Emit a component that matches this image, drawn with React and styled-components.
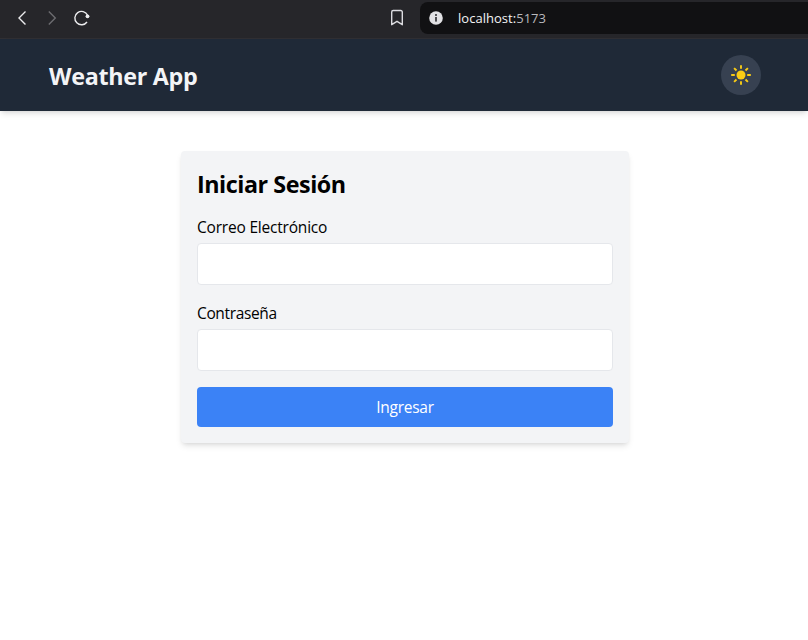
import React from 'react';
import styled, { createGlobalStyle } from 'styled-components';

const GlobalStyle = createGlobalStyle`
  *, *::before, *::after { box-sizing: border-box; }
  body {
    margin: 0;
    min-height: 100vh;
    background: #ffffff;
    color: #000000;
    font: 15.5px/24px "Open Sans", "Noto Sans", sans-serif;
  }
`;

const BrowserBar = styled.div`
  height: 39px;
  padding-left: 12px;
  display: flex;
  align-items: flex-start;
  background: #26262a;
  border-bottom: 1px solid #302f33;
`;

const NavButtons = styled.div`
  display: flex;
  flex: 0 0 375px;
  gap: 10px;
  padding-top: 8px;
`;

const BarIcon = styled.svg`
  display: block;
  flex: none;
  width: 20px;
  height: 20px;
  fill: none;
  stroke: ${(p) => (p.$dim ? '#6c6c70' : '#ececee')};
  stroke-width: 1.4;
`;

const Bookmark = styled(BarIcon)`
  margin: 8px 13px 0 0;
  stroke: #dcdce0;
`;

const AddressBar = styled.div`
  flex: 1;
  height: 32px;
  margin-top: 2px;
  padding-left: 9px;
  display: flex;
  align-items: center;
  gap: 15px;
  background: #111113;
  border-radius: 8px 0 0 8px;
`;

const InfoIcon = styled.svg`
  width: 14px;
  height: 14px;
  display: block;
`;

const Address = styled.span`
  font-size: 13px;
  line-height: 20px;
  letter-spacing: 0.03px;
  color: #f4f4f5;
`;

const Port = styled.span`
  color: #b9b9bd;
`;

const Header = styled.header`
  height: 72px;
  padding: 0 47px 0 49px;
  display: flex;
  align-items: center;
  justify-content: space-between;
  background: #1f2937;
  color: #f3f4f6;
  box-shadow: 0 4px 6px -1px rgba(0, 0, 0, 0.1), 0 2px 4px -2px rgba(0, 0, 0, 0.1);
`;

const Title = styled.h1`
  margin: 1px 0 0;
  font-size: 23.3px;
  line-height: 32px;
  font-weight: 700;
  letter-spacing: -0.3px;
`;

const ThemeButton = styled.button`
  width: 40px;
  height: 40px;
  padding: 0;
  display: grid;
  place-items: center;
  border: 0;
  border-radius: 50%;
  background: #374151;
`;

const Sun = styled.svg`
  width: 20px;
  height: 20px;
  fill: #facc15;
  stroke: #facc15;
  stroke-width: 1.9;
`;

const Main = styled.main`
  display: flex;
  justify-content: center;
  padding: 40px 0 0 2px;
`;

const Card = styled.form`
  width: 448px;
  padding: 16px;
  background: #f3f4f6;
  border-radius: 4px;
  box-shadow: 0 4px 6px -1px rgba(0, 0, 0, 0.1), 0 2px 4px -2px rgba(0, 0, 0, 0.1);
`;

const CardTitle = styled.h2`
  height: 32px;
  margin: 0 0 16px;
  padding-top: 1px;
  font-size: 23.3px;
  line-height: 32px;
  font-weight: 700;
  letter-spacing: -0.45px;
`;

const Field = styled.div`
  margin-bottom: 16px;
`;

const Label = styled.label`
  display: block;
  height: 24px;
  margin-bottom: 4px;
  letter-spacing: ${(p) => p.$tracking};
`;

const Input = styled.input`
  display: block;
  width: 100%;
  height: 42px;
  padding: 8px;
  font: inherit;
  background: #ffffff;
  border: 1px solid #e5e7eb;
  border-radius: 4px;
  outline: 0;
`;

const Submit = styled.button`
  display: block;
  width: 100%;
  height: 40px;
  padding: 0;
  font: inherit;
  letter-spacing: -0.25px;
  color: #ffffff;
  background: #3b82f6;
  border: 0;
  border-radius: 4px;
`;

export default function App() {
  return (
    <>
      <GlobalStyle />
      <BrowserBar>
        <NavButtons>
          <BarIcon viewBox="0 0 20 20"><path d="M13.5 3.5 7 10l6.5 6.5" /></BarIcon>
          <BarIcon viewBox="0 0 20 20" $dim><path d="M6.8 3.5 13.3 10l-6.5 6.5" /></BarIcon>
          <BarIcon viewBox="0 0 20 20">
            <path d="M15.6 7.2A6.7 6.7 0 1 0 15 14" />
            <circle cx="15.5" cy="8.3" r="1.9" fill="#ececee" stroke="none" />
          </BarIcon>
        </NavButtons>
        <Bookmark viewBox="0 0 20 20">
          <path d="M4.7 16.7V4a1.5 1.5 0 0 1 1.5-1.5h7.6A1.5 1.5 0 0 1 15.3 4v12.7L10 13.3z" strokeLinejoin="round" />
        </Bookmark>
        <AddressBar>
          <InfoIcon viewBox="0 0 14 14">
            <circle cx="7" cy="7" r="6.8" fill="#e2e2e5" />
            <circle cx="7" cy="4" r="1" fill="#2a2a2e" />
            <rect x="6.2" y="6" width="1.6" height="4.6" fill="#2a2a2e" />
          </InfoIcon>
          <Address>localhost:<Port>5173</Port></Address>
        </AddressBar>
      </BrowserBar>
      <Header>
        <Title>Weather App</Title>
        <ThemeButton type="button" aria-label="Tema">
          <Sun viewBox="0 0 20 20">
            <circle cx="10" cy="10" r="4.5" stroke="none" />
            <path d="M10 .2v3.6M10 16.2v3.6M.2 10h3.6M16.2 10h3.6M3.1 3.1l2.4 2.4M14.5 14.5l2.4 2.4M16.9 3.1l-2.4 2.4M5.5 14.5l-2.4 2.4" />
          </Sun>
        </ThemeButton>
      </Header>
      <Main>
        <Card>
          <CardTitle>Iniciar Sesión</CardTitle>
          <Field>
            <Label htmlFor="email" $tracking="-0.2px">Correo Electrónico</Label>
            <Input id="email" type="email" />
          </Field>
          <Field>
            <Label htmlFor="password" $tracking="-0.36px">Contraseña</Label>
            <Input id="password" type="password" />
          </Field>
          <Submit type="button">Ingresar</Submit>
        </Card>
      </Main>
    </>
  );
}
